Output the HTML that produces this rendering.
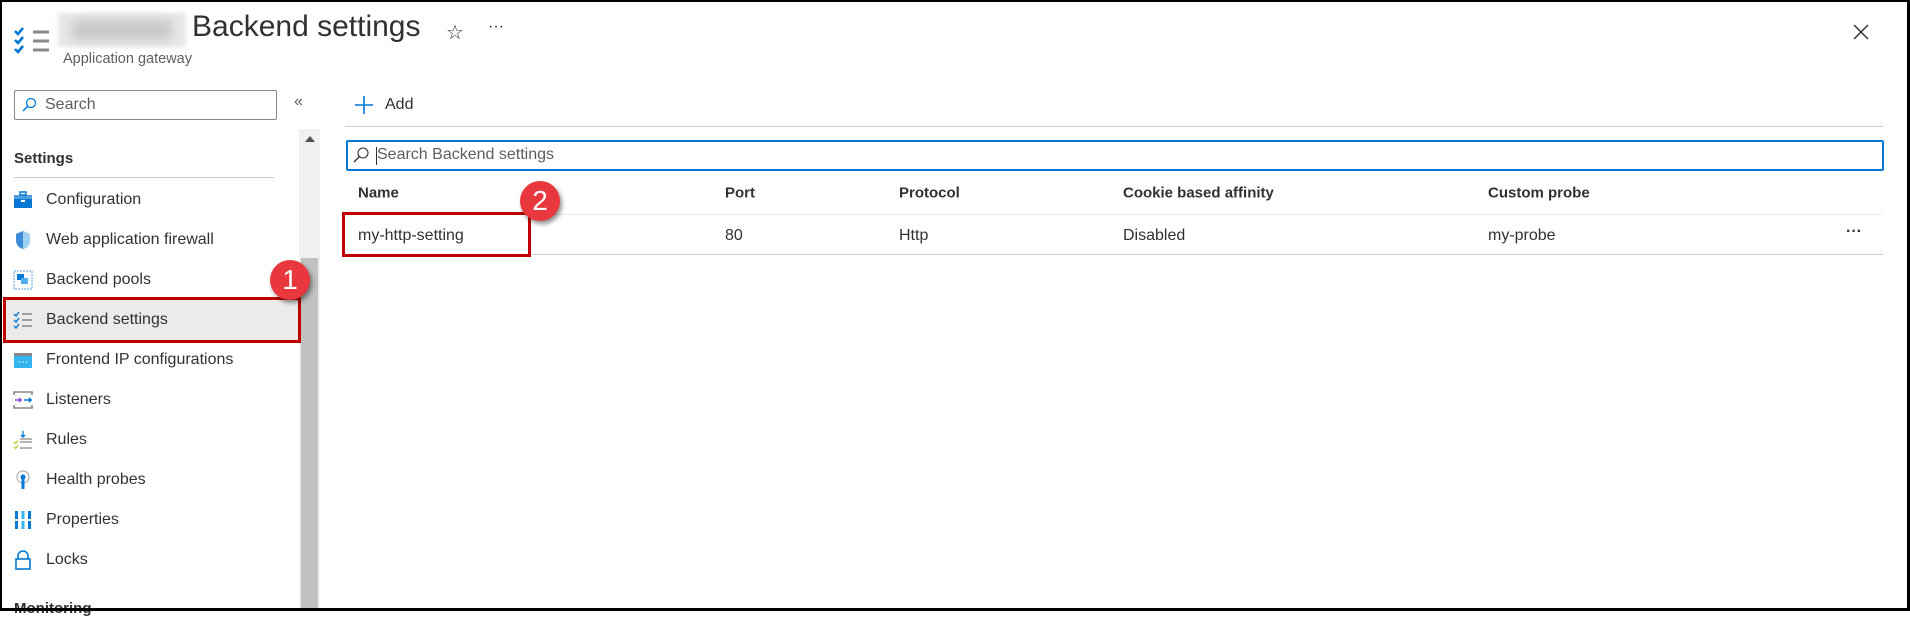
<!DOCTYPE html>
<html><head><meta charset="utf-8"><style>
*{margin:0;padding:0;box-sizing:border-box}
body{width:1910px;height:611px;overflow:hidden;background:#fff;font-family:"Liberation Sans",sans-serif;color:#323130;position:relative}
.a{position:absolute}
.frame{left:0;top:0;width:1910px;height:611px;border:2px solid #000;border-right-width:3px;border-bottom-width:3px;z-index:10;pointer-events:none}
.t{font-size:16px;white-space:nowrap}
.item{position:absolute;left:46px;font-size:16px;color:#323130;transform:translateY(-50%);white-space:nowrap}
.ic{position:absolute;left:13px;width:20px;height:20px}
.hd{font-size:15px;font-weight:bold;color:#323130;transform:translateY(-50%);white-space:nowrap}
.cell{font-size:16px;transform:translateY(-50%);white-space:nowrap}
.badge{width:40px;height:40px;border-radius:50%;background:#e8373d;color:#fff;font-size:28px;text-align:center;line-height:40px;box-shadow:2px 3px 5px rgba(0,0,0,.45)}
</style></head><body>
<div class="a frame"></div>

<svg class="a" style="left:13px;top:26px" width="38" height="30" viewBox="0 0 38 30">
<g fill="none" stroke="#0078d4" stroke-width="2.6"><path d="M2 5l3 3 5-6"/><path d="M2 14l3 3 5-6"/><path d="M2 23l3 3 5-6"/></g>
<g stroke="#8a8886" stroke-width="3"><path d="M20 6h16M20 15h16M20 24h16"/></g></svg>
<div class="a" style="left:58px;top:13px;width:128px;height:34px;background:#e8e8e8;filter:blur(2px)"></div>
<div class="a" style="left:72px;top:20px;width:100px;height:20px;background:#c8c8c8;filter:blur(5px)"></div>
<div class="a" style="left:192px;top:10px;font-size:30px;color:#323130">Backend settings</div>
<div class="a" style="left:63px;top:51px;font-size:14.5px;color:#605e5c">Application gateway</div>
<div class="a" style="left:446px;top:20px;font-size:20px;color:#323130">☆</div>
<div class="a" style="left:488px;top:18px;font-size:16px;color:#323130">···</div>
<svg class="a" style="left:1853px;top:24px" width="16" height="16"><path d="M1 1l14 14M15 1L1 15" stroke="#323130" stroke-width="1.5"/></svg>

<div class="a" style="left:14px;top:90px;width:263px;height:30px;border:1px solid #8a8886;border-radius:2px"></div>
<svg class="a" style="left:21px;top:97px" width="16" height="16"><circle cx="10" cy="6" r="4.5" fill="none" stroke="#0078d4" stroke-width="1.3"/><path d="M7 9L2 14" stroke="#0078d4" stroke-width="1.5"/></svg>
<div class="a t" style="left:45px;top:96px;color:#605e5c">Search</div>
<div class="a" style="left:294px;top:93px;font-size:16px;color:#605e5c">«</div>

<div class="a" style="left:299px;top:129px;width:21px;height:482px;background:#f0f0f0"></div>
<div class="a" style="left:301px;top:258px;width:17px;height:353px;background:#c1c1c1"></div>
<svg class="a" style="left:305px;top:135px" width="10" height="8"><path d="M0 7L5 1 10 7z" fill="#505050"/></svg>

<div class="a" style="left:14px;top:150px;font-size:15px;font-weight:bold">Settings</div>
<div class="a" style="left:14px;top:177px;width:260px;height:1px;background:#c8c6c4"></div>

<div class="a" style="left:3px;top:297px;width:298px;height:46px;background:#edebe9;border:3px solid #c00000"></div>

<svg class="ic" style="top:190px" viewBox="0 0 20 20"><rect x="1" y="5" width="18" height="13" fill="#0078d4"/><rect x="1" y="5" width="18" height="4" fill="#50a0e0"/><rect x="7" y="2" width="6" height="3" fill="none" stroke="#0078d4" stroke-width="1.5"/><rect x="8" y="10" width="4" height="2" fill="#fff"/></svg>
<div class="item" style="top:200px">Configuration</div>
<svg class="ic" style="top:230px" viewBox="0 0 20 20"><path d="M10 1L3 4v6c0 5 3 8 7 9 4-1 7-4 7-9V4z" fill="#3c8ad8"/><path d="M10 1v18c4-1 7-4 7-9V4z" fill="#9fd1f2"/></svg>
<div class="item" style="top:240px">Web application firewall</div>
<svg class="ic" style="top:270px" viewBox="0 0 20 20"><rect x="1" y="1" width="18" height="18" fill="none" stroke="#5ea0e0" stroke-dasharray="2 1"/><rect x="4" y="4" width="7" height="6" fill="#0078d4"/><rect x="8" y="8" width="7" height="6" fill="#50b0f0"/></svg>
<div class="item" style="top:280px">Backend pools</div>
<svg class="ic" style="top:310px" viewBox="0 0 20 20"><g fill="none" stroke="#0078d4" stroke-width="1.4"><path d="M1 4l2 2 3-4M1 10l2 2 3-4M1 16l2 2 3-4"/></g><path d="M9 4h10M9 10h10M9 16h10" stroke="#8a8886" stroke-width="1.6"/></svg>
<div class="item" style="top:320px">Backend settings</div>
<svg class="ic" style="top:350px" viewBox="0 0 20 20"><rect x="1" y="3" width="18" height="15" fill="#32b5f0"/><rect x="1" y="3" width="18" height="3" fill="#8a8886"/><path d="M6 12h1M9.5 12h1M13 12h1" stroke="#fff" stroke-width="1.6"/></svg>
<div class="item" style="top:360px">Frontend IP configurations</div>
<svg class="ic" style="top:390px" viewBox="0 0 20 20"><path d="M1 5V2h18v3M1 15v3h18v-3" fill="none" stroke="#8a8886" stroke-width="1.6"/><path d="M2 10h6M6 8l2 2-2 2" stroke="#8c4fe0" stroke-width="1.6" fill="none"/><path d="M11 10h7M16 8l2 2-2 2" stroke="#0078d4" stroke-width="1.6" fill="none"/></svg>
<div class="item" style="top:400px">Listeners</div>
<svg class="ic" style="top:430px" viewBox="0 0 20 20"><path d="M10 1v6M8 5l2 2 2-2" stroke="#0078d4" stroke-width="1.3" fill="none"/><path d="M1 12l1.5 1.5 2.5-3M1 17l1.5 1.5 2.5-3" stroke="#b5c833" stroke-width="1.2" fill="none"/><path d="M7 12h12M7 18h12M7 9h12" stroke="#8a8886" stroke-width="1.3"/></svg>
<div class="item" style="top:440px">Rules</div>
<svg class="ic" style="top:470px" viewBox="0 0 20 20"><circle cx="10" cy="7" r="6" fill="none" stroke="#b0b0b0" stroke-width="1.2"/><circle cx="10" cy="7" r="2.5" fill="#0078d4"/><rect x="8.5" y="8" width="3" height="11" fill="#0078d4"/></svg>
<div class="item" style="top:480px">Health probes</div>
<svg class="ic" style="top:510px" viewBox="0 0 20 20"><rect x="2" y="1" width="3" height="18" fill="#0078d4"/><rect x="8.5" y="1" width="3" height="18" fill="#32b5f0"/><rect x="15" y="1" width="3" height="18" fill="#0078d4"/><rect x="2" y="9" width="16" height="2" fill="#fff"/></svg>
<div class="item" style="top:520px">Properties</div>
<svg class="ic" style="top:550px" viewBox="0 0 20 20"><path d="M5 9V6a5 5 0 0 1 10 0v3" fill="none" stroke="#0078d4" stroke-width="1.6"/><rect x="3" y="9" width="14" height="10" fill="none" stroke="#0078d4" stroke-width="1.6"/></svg>
<div class="item" style="top:560px">Locks</div>
<div class="a" style="left:14px;top:600px;font-size:15px;font-weight:bold">Monitoring</div>

<div class="a badge" style="left:270px;top:260px">1</div>

<svg class="a" style="left:355px;top:96px" width="18" height="18"><path d="M9 0v18M0 9h18" stroke="#0078d4" stroke-width="1.6"/></svg>
<div class="a t" style="left:385px;top:96px">Add</div>
<div class="a" style="left:345px;top:126px;width:1538px;height:1px;background:#d2d0ce"></div>
<div class="a" style="left:346px;top:140px;width:1538px;height:31px;border:2px solid #0078d4;border-radius:2px"></div>
<svg class="a" style="left:352px;top:146px" width="18" height="18"><circle cx="11" cy="7" r="5" fill="none" stroke="#323130" stroke-width="1.1"/><path d="M7.5 10.5L2 16" stroke="#323130" stroke-width="1.3"/></svg>
<div class="a" style="left:376px;top:147px;width:1px;height:18px;background:#323130"></div>
<div class="a t" style="left:377px;top:146px;color:#605e5c">Search Backend settings</div>

<div class="a hd" style="left:358px;top:193px">Name</div>
<div class="a hd" style="left:725px;top:193px">Port</div>
<div class="a hd" style="left:899px;top:193px">Protocol</div>
<div class="a hd" style="left:1123px;top:193px">Cookie based affinity</div>
<div class="a hd" style="left:1488px;top:193px">Custom probe</div>
<div class="a" style="left:345px;top:214px;width:1538px;height:1px;background:#edebe9"></div>
<div class="a cell" style="left:358px;top:236px">my-http-setting</div>
<div class="a cell" style="left:725px;top:236px">80</div>
<div class="a cell" style="left:899px;top:236px">Http</div>
<div class="a cell" style="left:1123px;top:236px">Disabled</div>
<div class="a cell" style="left:1488px;top:236px">my-probe</div>
<div class="a" style="left:1846px;top:223px;font-size:16px;font-weight:bold;color:#323130">···</div>
<div class="a" style="left:345px;top:254px;width:1538px;height:1px;background:#d2d0ce"></div>
<div class="a" style="left:342px;top:212px;width:189px;height:45px;border:3px solid #c00000"></div>
<div class="a badge" style="left:520px;top:181px">2</div>
</body></html>
